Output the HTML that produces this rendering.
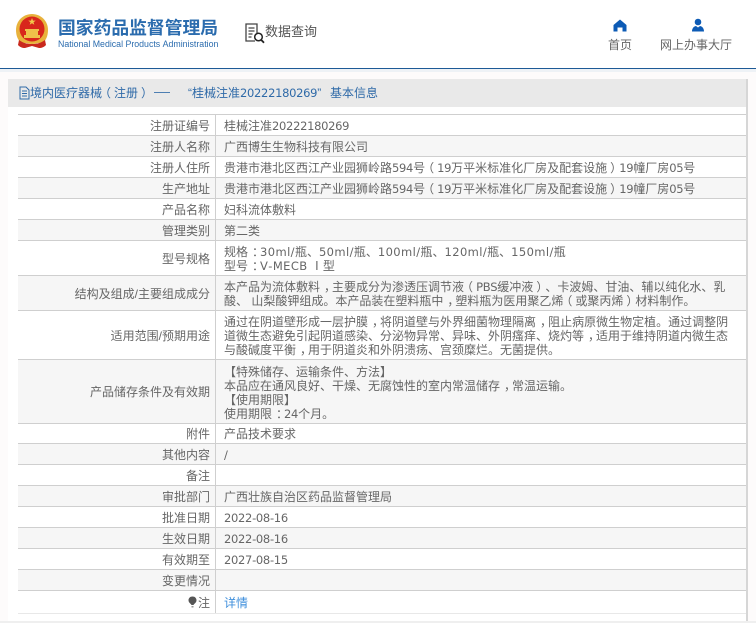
<!DOCTYPE html>
<html lang="zh-CN">
<head>
<meta charset="utf-8">
<title>国家药品监督管理局 数据查询</title>
<style>
html,body{margin:0;padding:0}
body{width:756px;height:623px;overflow:hidden;position:relative;background:#fff;font-family:"Liberation Sans","Noto Sans CJK SC",sans-serif;color:#666;text-spacing-trim:space-all;font-kerning:none}
.abs{position:absolute;white-space:nowrap}
#rule{position:absolute;left:0;top:68px;width:756px;height:1px;background:#1d5a96}
#dots{position:absolute;left:0;top:69px;width:756px;height:3px;background:#eef2f6}
#bg{position:absolute;left:0;top:72px;width:756px;height:551px;background:#fdfbfb}
#panel{position:absolute;left:8px;top:79px;width:738px;height:542px;background:#fff;border-right:2px solid #d6d6d6}
#phead{position:absolute;left:0;top:0;width:738px;height:28px;background:#e9e9e9;color:#2f6aa8;font-size:12px;line-height:28px}
#phead>span{position:absolute;top:0;white-space:nowrap}
#foot{position:absolute;left:0;top:621px;width:756px;height:2px;background:#efefef}
.r{position:absolute;left:18px;width:728px;box-sizing:border-box;border-bottom:1px solid #cfcfcf;font-size:12px;color:#666}
.r.g{background:#f6f6f6}
.l{position:absolute;left:0;top:0;bottom:0;width:198px;box-sizing:border-box;padding-right:5px;text-align:right;border-right:1px solid #cfcfcf;display:flex;align-items:center;justify-content:flex-end;white-space:nowrap}
.v{position:absolute;left:206px;top:1px;bottom:0;width:516px;display:flex;align-items:center;line-height:14px}
.v div{white-space:pre}
.t2{top:2px}
.n{font-family:"DejaVu Sans",sans-serif;font-size:11.500px;letter-spacing:-.3px;font-style:normal}
.n.m{letter-spacing:.4px}
.a{position:relative;left:4px}
.b{position:relative;left:-3px;font-style:normal}
.c{position:relative;left:3px;font-style:normal}
</style>
</head>
<body>
<div id="rule"></div><div id="dots"></div><div id="bg"></div>

<svg class="abs" style="left:15px;top:13px" width="34" height="36" viewBox="0 0 34 36">
<path d="M17 1C8 1 1 8 1 17c0 6 2 10 5 13l22 0c3-3 5-7 5-13C33 8 26 1 17 1z" fill="#e8b23c"/>
<circle cx="17" cy="16" r="12.500" fill="#d8261c"/>
<path d="M9 22h16v3H9zM11 18h12v4H11zM10 16h14v2H10z" fill="#efc04a"/>
<path d="M17 5l1 2.600 2.700 0-2.200 1.600.8 2.600-2.300-1.600-2.300 1.600.8-2.600-2.200-1.600 2.700 0z" fill="#f2c94c"/>
<path d="M4 27c4 3 8 4 13 4s9-1 13-4l1 5c-2 2-4 3-7 3l-7-2-7 2c-3 0-5-1-7-3z" fill="#c9281d"/>
<path d="M8 27c3 2 6 3 9 3s6-1 9-3" fill="none" stroke="#e8b23c" stroke-width="2"/>
</svg>
<div class="abs" style="left:58px;top:16px;font-size:17.800px;line-height:24px;font-weight:700;color:#2b6cae">国家药品监督管理局</div>
<div class="abs" style="left:58px;top:38px;font-size:8.800px;line-height:12px;color:#2b6cae">National Medical Products Administration</div>

<svg class="abs" style="left:244px;top:22px" width="22" height="22" viewBox="0 0 22 22">
<path d="M13 13V2H2v17h9" fill="none" stroke="#444" stroke-width="1.300"/>
<path d="M4.500 6h6M4.500 9h6M4.500 12h4M4.500 15h3" stroke="#444" stroke-width="1.200"/>
<circle cx="14.500" cy="15" r="3.800" fill="#fff" stroke="#222" stroke-width="1.500"/>
<path d="M17.300 18l2.700 2.800" stroke="#222" stroke-width="1.800"/>
</svg>
<div class="abs" style="left:265px;top:22px;font-size:13px;line-height:20px;color:#555">数据查询</div>

<svg class="abs" style="left:613px;top:19px" width="14" height="13" viewBox="0 0 14 13">
<path d="M7 .5L13.500 6V12.500H9.500V8.500H4.500V12.500H.5V6z" fill="#0d5bb5"/>
</svg>
<svg class="abs" style="left:691px;top:18px" width="14" height="14" viewBox="0 0 14 14">
<circle cx="7" cy="4" r="3.300" fill="#0d5bb5"/>
<path d="M1 13.500c0-3 1.500-5 4-5.500l2 1.500 2-1.500c2.500.5 4 2.500 4 5.500z" fill="#0d5bb5"/>
</svg>
<div class="abs" style="left:608px;top:37px;font-size:12px;line-height:17px;color:#666">首页</div>
<div class="abs" style="left:660px;top:37px;font-size:12px;line-height:17px;color:#666">网上办事大厅</div>

<div id="panel">
<div id="phead"><svg style="position:absolute;left:11px;top:7px" width="11" height="14" viewBox="0 0 11 14"><path d="M1 1h6l3 3v9H1zM3 5h5M3 7.500h5M3 10h5" fill="none" stroke="#2f6aa8" stroke-width="1"/></svg><span style="left:22px">境内医疗器械<i class="b">（</i>注册<i class="c">）</i></span><span style="left:146px;font-size:8px;font-weight:700">——</span><span style="left:180px">“桂械注准<i class="n">20222180269</i>”</span><span style="left:322px">基本信息</span></div>
</div>
<div id="foot"></div>

<div class="r" style="top:114px;height:22px;border-top:1px solid #cfcfcf"><div class="l">注册证编号</div><div class="v"><div>桂械注准<span class="n">20222180269</span></div></div></div>
<div class="r g" style="top:136px;height:21px"><div class="l">注册人名称</div><div class="v"><div>广西博生生物科技有限公司</div></div></div>
<div class="r" style="top:157px;height:21px"><div class="l">注册人住所</div><div class="v"><div>贵港市港北区西江产业园狮岭路<span class="n">594</span>号<span class="b">（</span><span class="n">19</span>万平米标准化厂房及配套设施<span class="c">）</span><span class="n">19</span>幢厂房<span class="n">05</span>号</div></div></div>
<div class="r g" style="top:178px;height:21px"><div class="l">生产地址</div><div class="v"><div>贵港市港北区西江产业园狮岭路<span class="n">594</span>号<span class="b">（</span><span class="n">19</span>万平米标准化厂房及配套设施<span class="c">）</span><span class="n">19</span>幢厂房<span class="n">05</span>号</div></div></div>
<div class="r" style="top:199px;height:21px"><div class="l">产品名称</div><div class="v"><div>妇科流体敷料</div></div></div>
<div class="r g" style="top:220px;height:21px"><div class="l">管理类别</div><div class="v"><div>第二类</div></div></div>
<div class="r" style="top:241px;height:35px"><div class="l">型号规格</div><div class="v t2"><div>规格<span class="a">：</span><span class="n m">30ml/</span>瓶、<span class="n m">50ml/</span>瓶、<span class="n m">100ml/</span>瓶、<span class="n m">120ml/</span>瓶、<span class="n m">150ml/</span>瓶
型号<span class="a">：</span><span class="n m">V-MECB</span> Ⅰ型</div></div></div>
<div class="r g" style="top:276px;height:35px"><div class="l">结构及组成/主要组成成分</div><div class="v t2"><div>本产品为流体敷料<span class="a">，</span>主要成分为渗透压调节液<span class="b">（</span><span class="n">PBS</span>缓冲液<span class="c">）</span>、卡波姆、甘油、辅以纯化水、乳
酸、 山梨酸钾组成。本产品装在塑料瓶中<span class="a">，</span>塑料瓶为医用聚乙烯<span class="b">（</span>或聚丙烯<span class="c">）</span>材料制作。</div></div></div>
<div class="r" style="top:311px;height:49px"><div class="l">适用范围/预期用途</div><div class="v"><div>通过在阴道壁形成一层护膜<span class="a">，</span>将阴道壁与外界细菌物理隔离<span class="a">，</span>阻止病原微生物定植。通过调整阴
道微生态避免引起阴道感染、分泌物异常、异味、外阴瘙痒、烧灼等<span class="a">，</span>适用于维持阴道内微生态
与酸碱度平衡<span class="a">，</span>用于阴道炎和外阴溃疡、宫颈糜烂。无菌提供。</div></div></div>
<div class="r g" style="top:360px;height:64px"><div class="l">产品储存条件及有效期</div><div class="v t2"><div>【特殊储存、运输条件、方法】
本品应在通风良好、干燥、无腐蚀性的室内常温储存<span class="a">，</span>常温运输。
【使用期限】
使用期限<span class="a">：</span><span class="n">24</span>个月。</div></div></div>
<div class="r" style="top:424px;height:20px"><div class="l">附件</div><div class="v"><div>产品技术要求</div></div></div>
<div class="r g" style="top:444px;height:21px"><div class="l">其他内容</div><div class="v"><div><span class="n">/</span></div></div></div>
<div class="r" style="top:465px;height:21px"><div class="l">备注</div><div class="v"></div></div>
<div class="r g" style="top:486px;height:21px"><div class="l">审批部门</div><div class="v"><div>广西壮族自治区药品监督管理局</div></div></div>
<div class="r" style="top:507px;height:21px"><div class="l">批准日期</div><div class="v"><div class="n">2022-08-16</div></div></div>
<div class="r g" style="top:528px;height:21px"><div class="l">生效日期</div><div class="v"><div class="n">2022-08-16</div></div></div>
<div class="r" style="top:549px;height:21px"><div class="l">有效期至</div><div class="v"><div class="n">2027-08-15</div></div></div>
<div class="r g" style="top:570px;height:21px"><div class="l">变更情况</div><div class="v"></div></div>
<div class="r" style="top:591px;height:23px;border-bottom-color:#e8e8e8"><div class="l"><svg width="9" height="12" viewBox="0 0 9 12" style="margin-right:1px"><path d="M4.500.5C2 .5.500 2.300.500 4.300c0 2.200 2 3.300 3 4.700h2c1-1.400 3-2.500 3-4.700C8.500 2.300 7 .5 4.500.5z" fill="#555"/><path d="M3.500 10h2v1.500h-2z" fill="#999"/></svg>注</div><div class="v"><div style="color:#3f8fdc">详情</div></div></div>
</body>
</html>
